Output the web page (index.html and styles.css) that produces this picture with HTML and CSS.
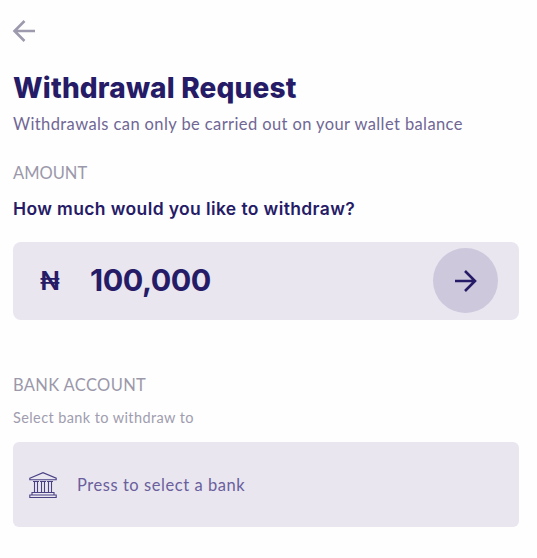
FILE: index.html
```html
<!DOCTYPE html>
<html lang="en">
<head>
    <meta charset="UTF-8">
    <meta name="viewport" content="width=device-width, initial-scale=1.0">
    <title>Withdrawal Request</title>
    <link rel="stylesheet" href="styles.css">
</head>
<body>
    <div class="container">
        <button class="back" aria-label="Back">
            <svg width="24" height="24" viewBox="0 0 24 24">
                <path d="M23 12H3M12.5 2L2.5 12l10 10"/>
            </svg>
        </button>

        <h1>Withdrawal Request</h1>
        <p class="subtitle">Withdrawals can only be carried out on your wallet balance</p>

        <h2 class="label amount-label">AMOUNT</h2>
        <p class="question">How much would you like to withdraw?</p>
        <div class="amount-box">
            <span class="currency">₦</span>
            <span class="amount">100,000</span>
            <button class="next" aria-label="Continue">
                <svg width="24" height="24" viewBox="0 0 24 24">
                    <path d="M1 12h20M11 2l10 10-10 10"/>
                </svg>
            </button>
        </div>

        <h2 class="label bank-label">BANK ACCOUNT</h2>
        <p class="hint">Select bank to withdraw to</p>
        <div class="bank-box">
            <svg class="bank-icon" width="28" height="28" viewBox="0 0 28 28">
                <path d="M.8 7.2L14 1.7l13.2 5.5v1.6H.8zM3 21.5h22v2.5H3zM.8 24h26.4v2.5H.8z"/>
                <path d="M4 10.5h6M11 10.5h6M18 10.5h6"/>
                <path d="M5.5 10.5v11M8.5 10.5v11M12.5 10.5v11M15.5 10.5v11M19.5 10.5v11M22.5 10.5v11"/>
            </svg>
            <span class="bank-text">Press to select a bank</span>
        </div>
    </div>
</body>
</html>
```
FILE: styles.css
```css
* {
    box-sizing: border-box;
}

body {
    margin: 0;
    font-family: Lato, "Liberation Sans", sans-serif;
    color: #261b66;
    background-color: #fefefe;
}

.container {
    padding: 19px 18px 0 13px;
}

h1, h2, p {
    margin: 0;
    white-space: nowrap;
}

button {
    padding: 0;
    border: none;
    cursor: pointer;
}

svg {
    display: block;
    fill: none;
}

.back {
    width: 24px;
    height: 24px;
    margin-left: -1px;
    background: none;
    stroke: #9d9aae;
    stroke-width: 2.6;
}

h1 {
    margin-top: 24px;
    font-family: Inter, Lato, sans-serif;
    font-size: 28px;
    font-weight: 800;
    line-height: 36px;
    letter-spacing: 0.17px;
}

.subtitle {
    margin-top: 6px;
    font-size: 16.5px;
    line-height: 24px;
    letter-spacing: 0.4px;
    color: #706794;
}

.label {
    font-size: 16.5px;
    font-weight: 400;
    line-height: 24px;
    color: #9b98aa;
}

.amount-label {
    margin-top: 25px;
}

.question {
    margin-top: 12px;
    font-family: Inter, Lato, sans-serif;
    font-size: 17.5px;
    font-weight: 600;
    line-height: 24px;
    letter-spacing: 0.38px;
}

.amount-box {
    display: flex;
    align-items: center;
    height: 78px;
    margin-top: 21px;
    padding: 0 21px 1px 27px;
    border-radius: 8px;
    background-color: #e9e6f0;
}

.currency {
    width: 50px;
    font-family: Inter, Lato, sans-serif;
    font-size: 26px;
    font-weight: 600;
}

.amount {
    flex: 1;
    padding-bottom: 2px;
    font-family: Inter, Lato, sans-serif;
    font-size: 30.5px;
    font-weight: 700;
    letter-spacing: -0.5px;
}

.next {
    display: flex;
    justify-content: center;
    align-items: center;
    width: 65px;
    height: 65px;
    border-radius: 50%;
    background-color: #cdc8dc;
    stroke: #261b66;
    stroke-width: 2.6;
}

.bank-label {
    margin-top: 53px;
    letter-spacing: 0.35px;
}

.hint {
    margin-top: 11px;
    font-size: 14.5px;
    line-height: 20px;
    letter-spacing: 0.4px;
    color: #a09dae;
}

.bank-box {
    display: flex;
    align-items: center;
    height: 85px;
    margin-top: 14px;
    padding-left: 16px;
    border-radius: 6px;
    background-color: #e9e6f0;
}

.bank-icon {
    stroke: #4a4185;
    stroke-width: 1.1;
}

.bank-text {
    margin-left: 20px;
    font-size: 16.5px;
    letter-spacing: 0.55px;
    color: #6a5f9c;
}
```
